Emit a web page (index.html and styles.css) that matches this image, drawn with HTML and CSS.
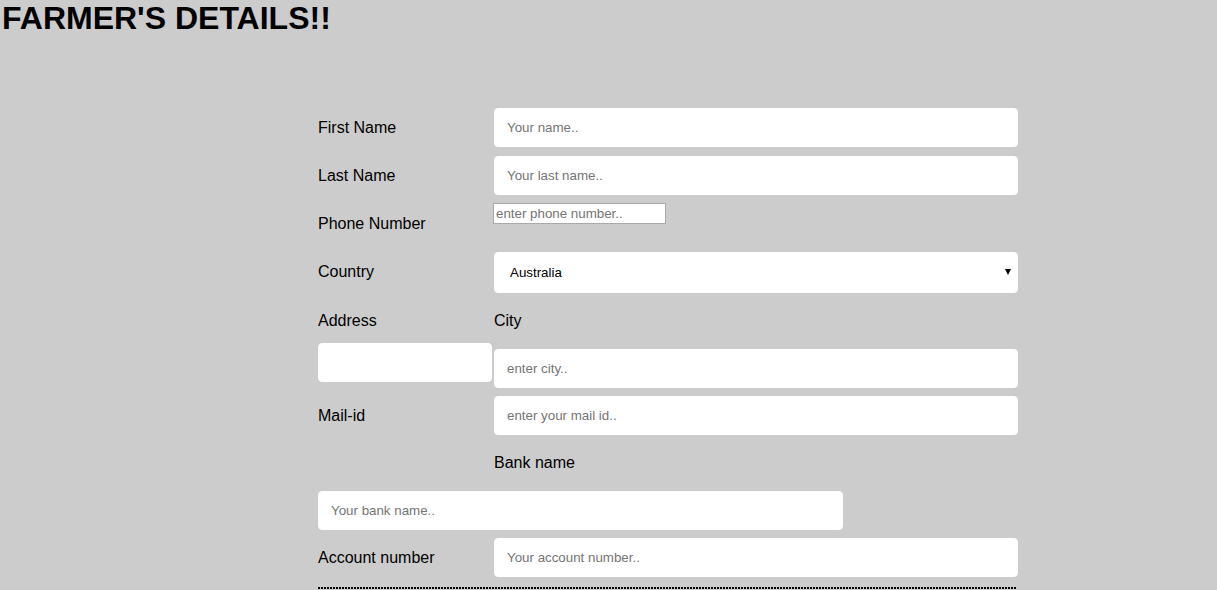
FILE: index.html
```html
<!DOCTYPE html>
<html>
<head>
<meta charset="utf-8">
<title>Farmer's Details</title>
<link rel="stylesheet" href="styles.css">
</head>
<body>
<h1 class="title">FARMER'S DETAILS!!</h1>
<form class="form">
  <div class="row">
    <label class="label-col" for="fname">First Name</label>
    <div class="field-col"><input class="text-input" id="fname" type="text" placeholder="Your name.."></div>
  </div>
  <div class="row row-gap9">
    <label class="label-col" for="lname">Last Name</label>
    <div class="field-col"><input class="text-input" id="lname" type="text" placeholder="Your last name.."></div>
  </div>
  <div class="row row-top row-phone">
    <label class="label-col label-phone" for="phone">Phone Number</label>
    <div class="field-col"><input class="plain-input" id="phone" type="text" placeholder="enter phone number.."></div>
  </div>
  <div class="row row-gap8">
    <label class="label-col label-country" for="country">Country</label>
    <div class="field-col select-wrap">
      <select class="select" id="country">
        <option>Australia</option>
        <option>Canada</option>
        <option>USA</option>
      </select>
    </div>
  </div>
  <div class="row row-top row-heads">
    <label class="label-col head-label" for="address">Address</label>
    <label class="field-col head-label" for="city">City</label>
  </div>
  <div class="row row-top row-addr">
    <div class="label-col"><input class="text-input addr-input" id="address" type="text"></div>
    <div class="field-col"><input class="text-input city-input" id="city" type="text" placeholder="enter city.."></div>
  </div>
  <div class="row row-gap8">
    <label class="label-col" for="mail">Mail-id</label>
    <div class="field-col"><input class="text-input" id="mail" type="text" placeholder="enter your mail id.."></div>
  </div>
  <div class="row row-top row-bankhead">
    <div class="label-col"></div>
    <label class="field-col bank-label" for="bank">Bank name</label>
  </div>
  <div class="row">
    <input class="text-input bank-input" id="bank" type="text" placeholder="Your bank name..">
  </div>
  <div class="row row-gap8">
    <label class="label-col" for="acc">Account number</label>
    <div class="field-col"><input class="text-input" id="acc" type="text" placeholder="Your account number.."></div>
  </div>
  <div class="divider"></div>
</form>
</body>
</html>
```
FILE: styles.css
```css
html, body {
  margin: 0;
  padding: 0;
  background: #cccccc;
  font-family: "Liberation Sans", Arial, sans-serif;
  color: #000;
  overflow: hidden;
}

.title {
  margin: 0;
  padding-left: 2px;
  font-size: 32px;
  line-height: 37px;
  font-weight: bold;
}

.form {
  width: 700px;
  margin: 71px 0 0 318px;
}

.row {
  display: flex;
  align-items: center;
}

.row-top {
  align-items: flex-start;
}

.row-gap9 { margin-top: 9px; }
.row-gap8 { margin-top: 8px; }

.label-col {
  width: 176px;
  flex: none;
  font-size: 16px;
  line-height: 18px;
}

.field-col {
  flex: 1;
  min-width: 0;
  font-size: 16px;
  line-height: 18px;
}

.text-input {
  display: block;
  width: 100%;
  height: 39px;
  box-sizing: border-box;
  padding: 12px;
  border: 1px solid #fff;
  border-radius: 4px;
  background: #fff;
  font-family: "Liberation Sans", Arial, sans-serif;
  font-size: 13.333px;
  color: #000;
  outline: none;
}

.text-input::placeholder,
.plain-input::placeholder {
  color: #757575;
}

.row-phone {
  margin-top: 8px;
  height: 41px;
}

.label-phone {
  padding-top: 12px;
}

.label-country {
  padding-bottom: 2px;
}

.plain-input {
  display: block;
  width: 173px;
  height: 21px;
  margin-left: -1px;
  box-sizing: border-box;
  padding: 1px 2px;
  border: 1px solid #a9a9a9;
  background: #fff;
  font-family: "Liberation Sans", Arial, sans-serif;
  font-size: 13.333px;
  outline: none;
}

.select-wrap {
  position: relative;
}

.select {
  display: block;
  width: 100%;
  height: 41px;
  box-sizing: border-box;
  padding: 0 12px 0 15px;
  border: 1px solid #fff;
  border-radius: 4px;
  background: #fff;
  font-family: "Liberation Sans", Arial, sans-serif;
  font-size: 13.333px;
  color: #000;
  appearance: none;
  -webkit-appearance: none;
  outline: none;
}

.select-wrap::after {
  content: "";
  position: absolute;
  right: 7px;
  top: 17px;
  border-left: 3.5px solid transparent;
  border-right: 3.5px solid transparent;
  border-top: 6px solid #000;
  pointer-events: none;
}

.row-heads {
  margin-top: 8px;
  height: 42px;
}

.head-label {
  padding-top: 11px;
}

.row-addr {
  height: 45px;
}

.addr-input {
  width: 174px;
}

.city-input {
  margin-top: 6px;
}

.row-bankhead {
  height: 56px;
}

.bank-label {
  padding-top: 19px;
}

.bank-input {
  width: 525px;
}

.divider {
  margin-top: 10px;
  width: 698px;
  height: 2px;
  background: repeating-linear-gradient(to right, #000 0, #000 2px, transparent 2px, transparent 3px);
}
```
